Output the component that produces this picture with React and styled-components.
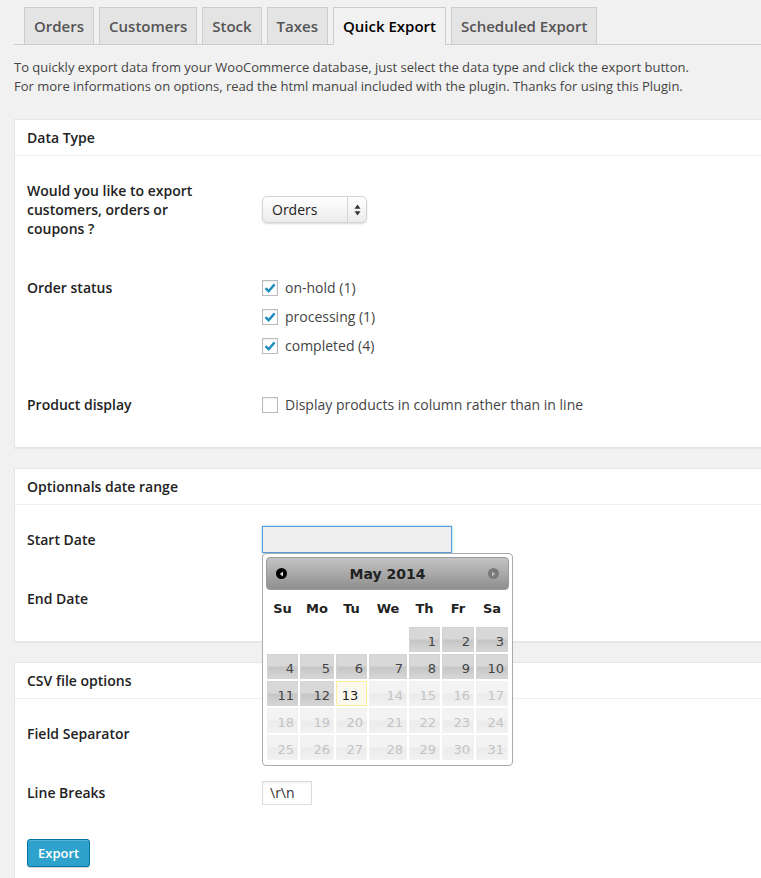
import React from "react";
import styled, { createGlobalStyle } from "styled-components";

const GlobalStyle = createGlobalStyle`
  html, body {
    margin: 0;
    padding: 0;
    background: #f1f1f1;
    overflow-x: hidden;
  }
  body {
    font-family: "Open Sans", "Noto Sans", sans-serif;
    font-size: 13px;
    color: #444;
  }
`;

const tabs = ["Orders", "Customers", "Stock", "Taxes", "Quick Export", "Scheduled Export"];
const statuses = ["on-hold (1)", "processing (1)", "completed (4)"];
const dayNames = ["Su", "Mo", "Tu", "We", "Th", "Fr", "Sa"];

const Page = styled.div`
  padding: 7px 0 40px 14px;
`;

const TabBar = styled.div`
  display: flex;
  gap: 5px;
  padding-left: 10px;
  border-bottom: 1px solid #ccc;
  margin-right: -20px;
`;

const Tab = styled.div`
  padding: 8px 9px;
  line-height: 20px;
  font-size: 15px;
  font-weight: 600;
  border: 1px solid #ccc;
  border-bottom: none;
  background: ${(p) => (p.$active ? "#f1f1f1" : "#e4e4e4")};
  color: ${(p) => (p.$active ? "#000" : "#555")};
  margin-bottom: ${(p) => (p.$active ? "-1px" : "0")};
  padding-bottom: ${(p) => (p.$active ? "9px" : "8px")};
`;

const Intro = styled.p`
  margin: 13px 0 23px;
  line-height: 19px;
  font-size: 13px;
  color: #444;
`;

const Panel = styled.div`
  background: #fff;
  border: 1px solid #e5e5e5;
  margin-right: -30px;
  margin-bottom: 20px;
  box-shadow: 0 1px 1px rgba(0, 0, 0, 0.04);
`;

const PanelHead = styled.h3`
  margin: 0;
  padding: 8px 12px;
  line-height: 19px;
  font-size: 14px;
  font-weight: 600;
  color: #222;
  border-bottom: 1px solid #eee;
`;

const PanelBody = styled.div`
  padding: 5px 12px 13px;
`;

const Row = styled.div`
  display: grid;
  grid-template-columns: 235px 1fr;
  align-items: ${(p) => p.$align || "center"};
  padding: 20px 0;
  position: relative;
`;

const Label = styled.div`
  font-size: 14px;
  font-weight: 600;
  color: #222;
  line-height: 19px;
  width: 190px;
`;

const SelectBox = styled.div`
  width: 103px;
  height: 25px;
  border: 1px solid #d4d4d4;
  border-radius: 5px;
  background: linear-gradient(#fff, #ececec);
  box-shadow: 0 1px 2px rgba(0, 0, 0, 0.15);
  display: flex;
  align-items: center;
  box-sizing: content-box;
`;

const SelectText = styled.span`
  flex: 1;
  padding-left: 9px;
  font-size: 14px;
  color: #222;
`;

const SelectArrows = styled.span`
  width: 18px;
  height: 100%;
  border-left: 1px solid #d4d4d4;
  display: flex;
  align-items: center;
  justify-content: center;
`;

const CheckList = styled.div`
  display: flex;
  flex-direction: column;
  gap: 10px;
`;

const CheckItem = styled.label`
  display: flex;
  align-items: center;
  gap: 7px;
  line-height: 19px;
  font-size: 14px;
  color: #444;
`;

const Box = styled.span`
  width: 14px;
  height: 14px;
  border: 1px solid #bbb;
  background: #fff;
  box-shadow: inset 0 1px 2px rgba(0, 0, 0, 0.07);
  display: flex;
  align-items: center;
  justify-content: center;
  flex: none;
`;

const DateField = styled.div`
  position: relative;
  margin: -4px 0;
`;

const TextInput = styled.div`
  width: ${(p) => p.$w}px;
  height: ${(p) => p.$h}px;
  margin: ${(p) => p.$m || "0"};
  box-sizing: border-box;
  border: 1px solid ${(p) => (p.$focus ? "#5b9dd9" : "#ddd")};
  background: ${(p) => (p.$focus ? "#eeeeee" : "#fff")};
  box-shadow: ${(p) => (p.$focus ? "0 0 2px rgba(30,140,190,0.6)" : "inset 0 1px 2px rgba(0,0,0,0.07)")};
  padding: 0 7px;
  font-size: 14px;
  line-height: ${(p) => p.$h - 2}px;
  color: #333;
`;

const Picker = styled.div`
  position: absolute;
  top: 27px;
  left: 0;
  z-index: 5;
  width: 251px;
  box-sizing: border-box;
  padding: 3px 3px 5px;
  background: #fff;
  border: 1px solid #aaa;
  border-radius: 4px;
  font-family: "DejaVu Sans", Verdana, sans-serif;
`;

const PickerHead = styled.div`
  height: 33px;
  box-sizing: border-box;
  border: 1px solid #9a9a9a;
  border-radius: 4px;
  background: linear-gradient(#c4c4c4, #8e8e8e);
  display: flex;
  align-items: center;
  justify-content: space-between;
  padding: 0 9px;
`;

const Month = styled.span`
  font-weight: bold;
  font-size: 14px;
  color: #222;
`;

const NavDot = styled.span`
  width: 11px;
  height: 11px;
  border-radius: 50%;
  background: ${(p) => (p.$dim ? "#7a7a7a" : "#000")};
  display: flex;
  align-items: center;
  justify-content: center;
`;

const DayNames = styled.div`
  display: grid;
  grid-template-columns: 31px 34px 31px 38px 31px 32px 32px;
  column-gap: 2px;
  padding: 9px 1px 8px;
`;

const DayName = styled.span`
  text-align: center;
  font-weight: bold;
  font-size: 13px;
  line-height: 20px;
  color: #222;
`;

const Days = styled.div`
  display: grid;
  grid-template-columns: 31px 34px 31px 38px 31px 32px 32px;
  grid-auto-rows: 25px;
  gap: 2px;
  padding: 0 1px;
`;

const Day = styled.span`
  box-sizing: border-box;
  border: 1px solid ${(p) => (p.$today ? "#fcefa1" : p.$off ? "#f2f2f2" : "#d3d3d3")};
  background: ${(p) =>
    p.$today
      ? "#fbf9ee"
      : p.$off
      ? "linear-gradient(#f3f3f3 0%, #f3f3f3 45%, #ebebeb 55%, #f1f1f1 100%)"
      : "linear-gradient(#d8d8d8 0%, #d8d8d8 45%, #c6c6c6 55%, #d6d6d6 100%)"};
  color: ${(p) => (p.$today ? "#222" : p.$off ? "#c4c4c4" : "#444")};
  font-size: 13px;
  text-align: ${(p) => (p.$today ? "center" : "right")};
  padding: 4px 3px 0 0;
  line-height: 19px;
`;

const Button = styled.button`
  margin-top: 17px;
  height: 28px;
  padding: 0 10px;
  font-family: "Open Sans", sans-serif;
  font-size: 13px;
  font-weight: 600;
  color: #fff;
  background: #2ea2cc;
  border: 1px solid #0074a2;
  border-radius: 3px;
  box-shadow: inset 0 1px 0 rgba(120, 200, 230, 0.5), 0 1px 0 rgba(0, 0, 0, 0.15);
`;

const Tick = () => (
  <svg width="12" height="12" viewBox="0 0 12 12">
    <path d="M1.5 6.2 L4.6 9.2 L10.6 2.4" fill="none" stroke="#1e8cbe" strokeWidth="2.4" />
  </svg>
);

const Arrows = () => (
  <svg width="7" height="12" viewBox="0 0 7 12">
    <path d="M3.5 0.5 L6.5 4.8 L0.5 4.8 Z M3.5 11.5 L6.5 7.2 L0.5 7.2 Z" fill="#333" />
  </svg>
);

const Tri = ({ left, color }) => (
  <svg width="5" height="6" viewBox="0 0 5 6">
    <path d={left ? "M4 0.5 L0.8 3 L4 5.5 Z" : "M1 0.5 L4.2 3 L1 5.5 Z"} fill={color} />
  </svg>
);

const DatePicker = () => {
  const cells = [];
  for (let i = 0; i < 4; i++) cells.push(<span key={"e" + i} />);
  for (let d = 1; d <= 31; d++) {
    cells.push(
      <Day key={d} $today={d === 13} $off={d > 13}>
        {d}
      </Day>
    );
  }
  return (
    <Picker>
      <PickerHead>
        <NavDot>
          <Tri left color="#ddd" />
        </NavDot>
        <Month>May 2014</Month>
        <NavDot $dim>
          <Tri color="#bbb" />
        </NavDot>
      </PickerHead>
      <DayNames>
        {dayNames.map((n) => (
          <DayName key={n}>{n}</DayName>
        ))}
      </DayNames>
      <Days>{cells}</Days>
    </Picker>
  );
};

const App = () => {
  return (
    <>
      <GlobalStyle />
      <Page>
        <TabBar>
          {tabs.map((t) => (
            <Tab key={t} $active={t === "Quick Export"}>
              {t}
            </Tab>
          ))}
        </TabBar>
        <Intro>
          To quickly export data from your WooCommerce database, just select the data type and click the export button.
          <br />
          For more informations on options, read the html manual included with the plugin. Thanks for using this Plugin.
        </Intro>

        <Panel>
          <PanelHead>Data Type</PanelHead>
          <PanelBody>
            <Row>
              <Label>Would you like to export customers, orders or coupons ?</Label>
              <SelectBox>
                <SelectText>Orders</SelectText>
                <SelectArrows>
                  <Arrows />
                </SelectArrows>
              </SelectBox>
            </Row>
            <Row $align="start">
              <Label>Order status</Label>
              <CheckList>
                {statuses.map((s) => (
                  <CheckItem key={s}>
                    <Box>
                      <Tick />
                    </Box>
                    {s}
                  </CheckItem>
                ))}
              </CheckList>
            </Row>
            <Row $align="start">
              <Label>Product display</Label>
              <CheckItem>
                <Box />
                Display products in column rather than in line
              </CheckItem>
            </Row>
          </PanelBody>
        </Panel>

        <Panel>
          <PanelHead>Optionnals date range</PanelHead>
          <PanelBody>
            <Row>
              <Label>Start Date</Label>
              <DateField>
                <TextInput $w={190} $h={27} $focus />
                <DatePicker />
              </DateField>
            </Row>
            <Row>
              <Label>End Date</Label>
              <TextInput $w={190} $h={27} $m="-4px 0" />
            </Row>
          </PanelBody>
        </Panel>

        <Panel>
          <PanelHead>CSV file options</PanelHead>
          <PanelBody>
            <Row>
              <Label>Field Separator</Label>
              <TextInput $w={50} $h={24} $m="-3px 0">,</TextInput>
            </Row>
            <Row>
              <Label>Line Breaks</Label>
              <TextInput $w={50} $h={24} $m="-3px 0">\r\n</TextInput>
            </Row>
            <Button>Export</Button>
          </PanelBody>
        </Panel>
      </Page>
    </>
  );
};

export default App;
